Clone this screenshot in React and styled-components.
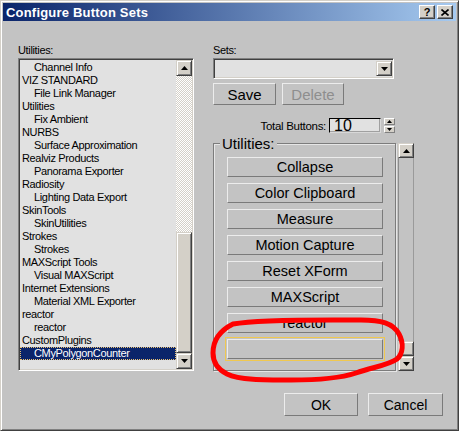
import React from 'react';
import styled, { createGlobalStyle } from 'styled-components';

const GlobalStyle = createGlobalStyle`
	html, body {
		margin: 0;
		padding: 0;
		background: #c3c3c3;
	}
	body {
		font-family: "Liberation Sans", Arial, sans-serif;
	}
`;

const SANS = `"Liberation Sans", Arial, sans-serif`;

const Window = styled.div`
	position: relative;
	width: 459px;
	height: 431px;
	box-sizing: border-box;
	background: #c3c3c3;
	border: 1px solid;
	border-color: #d4d0c8 #404040 #404040 #d4d0c8;
	box-shadow: inset 1px 1px 0 #fff, inset -1px -1px 0 #808080;
	padding: 2px;
	display: flex;
	flex-direction: column;
`;

const TitleBar = styled.div`
	height: 18px;
	display: flex;
	align-items: center;
	justify-content: space-between;
	padding: 0 3px;
	background: linear-gradient(to right, #0a246a, #a6caf0);
`;

const Title = styled.span`
	color: #fff;
	font: bold 13px ${SANS};
	letter-spacing: 0.2px;
`;

const TitleButtons = styled.div`
	display: flex;
	gap: 2px;
`;

const TitleButton = styled.div`
	width: 16px;
	height: 14px;
	box-sizing: border-box;
	background: #d4d0c8;
	border: 1px solid;
	border-color: #fff #404040 #404040 #fff;
	box-shadow: inset -1px -1px 0 #808080;
	display: flex;
	align-items: center;
	justify-content: center;
	font: bold 11px ${SANS};
	color: #000;
	line-height: 1;
`;

const Main = styled.div`
	display: flex;
	gap: 19px;
	padding: 22px 0 0 15px;
`;

const Column = styled.div`
	width: ${(p) => p.$width}px;
	display: flex;
	flex-direction: column;
`;

const Label = styled.div`
	font: 11px ${SANS};
	letter-spacing: -0.35px;
	line-height: 14px;
	height: 14px;
	margin-bottom: 1px;
	color: #000;
`;

const ListBox = styled.div`
	width: 176px;
	height: 313px;
	box-sizing: border-box;
	border: 1px solid;
	border-color: #808080 #fff #fff #808080;
	box-shadow: inset 1px 1px 0 #404040, inset -1px -1px 0 #d4d0c8;
	padding: 1px;
	background: #e1e1e1;
	display: flex;
`;

const Items = styled.div`
	flex: 1;
	overflow: hidden;
	padding-top: 1px;
`;

const Item = styled.div`
	height: 13px;
	line-height: 13px;
	padding-left: ${(p) => (p.$sub ? 14 : 2)}px;
	font: 11px ${SANS};
	letter-spacing: -0.35px;
	white-space: nowrap;
	box-sizing: border-box;
	color: ${(p) => (p.$selected ? '#fff' : '#000')};
	background: ${(p) => (p.$selected ? '#0a246a' : 'transparent')};
	outline: ${(p) => (p.$selected ? '1px dotted #e8c070' : 'none')};
	outline-offset: -1px;
`;

const ScrollBar = styled.div`
	width: 16px;
	display: flex;
	flex-direction: column;
`;

const ScrollButton = styled.div`
	width: 16px;
	height: ${(p) => p.$h || 16}px;
	box-sizing: border-box;
	background: #d4d0c8;
	border: 1px solid;
	border-color: #d4d0c8 #404040 #404040 #d4d0c8;
	box-shadow: inset 1px 1px 0 #fff, inset -1px -1px 0 #808080;
	display: flex;
	align-items: center;
	justify-content: center;
	flex-shrink: 0;
`;

const CheckerTrack = styled.div`
	flex: 1;
	background-color: #fff;
	background-image: repeating-conic-gradient(#d4d0c8 0 25%, #fff 0 50%);
	background-size: 2px 2px;
`;

const PlainTrack = styled.div`
	flex: 1;
	box-sizing: border-box;
	border-left: 1px solid #8c8c8c;
	border-right: 1px solid #9a9a9a;
	background: #c3c3c3;
`;

const Combo = styled.div`
	width: 181px;
	height: 21px;
	box-sizing: border-box;
	border: 1px solid;
	border-color: #808080 #fff #fff #808080;
	box-shadow: inset 1px 1px 0 #404040, inset -1px -1px 0 #d4d0c8;
	background: #e1e1e1;
	padding: 2px 1px 2px 2px;
	display: flex;
	justify-content: flex-end;
`;

const ComboButton = styled.div`
	width: 16px;
	height: 15px;
	box-sizing: border-box;
	background: #d4d0c8;
	border: 1px solid;
	border-color: #d4d0c8 #404040 #404040 #d4d0c8;
	box-shadow: inset 1px 1px 0 #fff, inset -1px -1px 0 #808080;
	display: flex;
	align-items: center;
	justify-content: center;
`;

const Row = styled.div`
	display: flex;
	align-items: center;
	gap: ${(p) => p.$gap || 0}px;
	margin-top: ${(p) => p.$top || 0}px;
	justify-content: ${(p) => p.$justify || 'flex-start'};
	padding-right: ${(p) => p.$right || 0}px;
`;

const Button = styled.div`
	width: ${(p) => p.$w}px;
	height: ${(p) => p.$h || 20}px;
	box-sizing: border-box;
	background: #c3c3c3;
	border: 1px solid;
	border-color: #ececec #7a7a7a #7a7a7a #ececec;
	display: flex;
	align-items: center;
	justify-content: center;
	font: ${(p) => p.$size || 14.5}px ${SANS};
	color: ${(p) => (p.$disabled ? '#8e8e8e' : '#000')};
	white-space: nowrap;
	flex-shrink: 0;
	outline: ${(p) => (p.$focus ? '1px solid #f0c850' : 'none')};
	outline-offset: 1px;
`;

const CountLabel = styled.span`
	font: 11.5px ${SANS};
	letter-spacing: -0.3px;
	color: #000;
`;

const NumberInput = styled.div`
	width: 52px;
	height: 15px;
	box-sizing: border-box;
	background: #e1e1e1;
	border: 1px solid;
	border-color: #000 #d8d8d8 #d8d8d8 #000;
	box-shadow: inset -1px -1px 0 #a0a0a0;
	font: 16px ${SANS};
	line-height: 13px;
	padding-left: 4px;
	color: #000;
	overflow: hidden;
`;

const Spinner = styled.div`
	width: 11px;
	height: 15px;
	display: flex;
	flex-direction: column;
	gap: 1px;
`;

const SpinHalf = styled.div`
	flex: 1;
	box-sizing: border-box;
	background: #d4d0c8;
	border: 1px solid;
	border-color: #fff #808080 #808080 #fff;
	display: flex;
	align-items: center;
	justify-content: center;
`;

const GroupRow = styled.div`
	display: flex;
	gap: 2px;
	margin-top: 10px;
	height: 228px;
`;

const GroupBox = styled.div`
	position: relative;
	width: 183px;
	box-sizing: border-box;
	border: 1px solid #7c7c7c;
	box-shadow: inset 1px 1px 0 #e6e6e6, 1px 1px 0 #e6e6e6;
	padding: 13px 12px 0 13px;
	display: flex;
	flex-direction: column;
	gap: 6px;
`;

const Legend = styled.span`
	position: absolute;
	top: -9px;
	left: 6px;
	padding: 0 2px;
	background: #c3c3c3;
	font: 15px ${SANS};
	line-height: 17px;
	color: #000;
`;

const Footer = styled.div`
	display: flex;
	justify-content: flex-end;
	gap: 10px;
	padding: 22px 13px 0 0;
`;

const Annotation = styled.svg`
	position: absolute;
	left: 0;
	top: 0;
	pointer-events: none;
`;

const Arrow = ({ up, w = 7, h = 4 }) => (
	<svg width={w} height={h} viewBox={`0 0 ${w} ${h}`}>
		<polygon
			points={up ? `${w / 2},0 ${w},${h} 0,${h}` : `0,0 ${w},0 ${w / 2},${h}`}
			fill="#000"
		/>
	</svg>
);

const listItems = [
	['Channel Info', true],
	['VIZ STANDARD', false],
	['File Link Manager', true],
	['Utilities', false],
	['Fix Ambient', true],
	['NURBS', false],
	['Surface Approximation', true],
	['Realviz Products', false],
	['Panorama Exporter', true],
	['Radiosity', false],
	['Lighting Data Export', true],
	['SkinTools', false],
	['SkinUtilities', true],
	['Strokes', false],
	['Strokes', true],
	['MAXScript Tools', false],
	['Visual MAXScript', true],
	['Internet Extensions', false],
	['Material XML Exporter', true],
	['reactor', false],
	['reactor', true],
	['CustomPlugins', false],
	['CMyPolygonCounter', true],
];

const utilityButtons = [
	'Collapse',
	'Color Clipboard',
	'Measure',
	'Motion Capture',
	'Reset XForm',
	'MAXScript',
	'reactor',
	'',
];

export default function App() {
	return (
		<>
			<GlobalStyle />
			<Window>
				<TitleBar>
					<Title>Configure Button Sets</Title>
					<TitleButtons>
						<TitleButton>?</TitleButton>
						<TitleButton>
							<svg width="8" height="7" viewBox="0 0 8 7">
								<path d="M0.5 0.5 L7.5 6.5 M7.5 0.5 L0.5 6.5" stroke="#000" strokeWidth="1.6" />
							</svg>
						</TitleButton>
					</TitleButtons>
				</TitleBar>

				<Main>
					<Column $width={176}>
						<Label>Utilities:</Label>
						<ListBox>
							<Items>
								{listItems.map(([text, sub], i) => (
									<Item key={i} $sub={sub} $selected={i === listItems.length - 1}>
										{text}
									</Item>
								))}
							</Items>
							<ScrollBar>
								<ScrollButton>
									<Arrow up />
								</ScrollButton>
								<CheckerTrack />
								<ScrollButton $h={121} />
								<ScrollButton>
									<Arrow />
								</ScrollButton>
							</ScrollBar>
						</ListBox>
					</Column>

					<Column $width={201}>
						<Label>Sets:</Label>
						<Combo>
							<ComboButton>
								<Arrow />
							</ComboButton>
						</Combo>
						<Row $gap={6} $top={4}>
							<Button $w={63} $h={22} $size={15}>Save</Button>
							<Button $w={62} $h={22} $size={15} $disabled>Delete</Button>
						</Row>
						<Row $gap={3} $top={13} $justify="flex-end" $right={19}>
							<CountLabel>Total Buttons:</CountLabel>
							<NumberInput>10</NumberInput>
							<Spinner>
								<SpinHalf>
									<Arrow up w={5} h={3} />
								</SpinHalf>
								<SpinHalf>
									<Arrow w={5} h={3} />
								</SpinHalf>
							</Spinner>
						</Row>
						<GroupRow>
							<GroupBox>
								<Legend>Utilities:</Legend>
								{utilityButtons.map((label, i) => (
									<Button key={i} $w={156} $focus={label === ''}>
										{label}
									</Button>
								))}
							</GroupBox>
							<ScrollBar>
								<ScrollButton $h={15}>
									<Arrow up />
								</ScrollButton>
								<PlainTrack />
								<ScrollButton $h={15} />
								<ScrollButton $h={15}>
									<Arrow />
								</ScrollButton>
							</ScrollBar>
						</GroupRow>
					</Column>
				</Main>

				<Footer>
					<Button $w={74} $h={23} $size={14}>OK</Button>
					<Button $w={75} $h={23} $size={14}>Cancel</Button>
				</Footer>

				<Annotation width="459" height="431" viewBox="0 0 459 431">
					<defs>
						<filter id="soft" x="-10%" y="-10%" width="120%" height="120%">
							<feGaussianBlur stdDeviation="0.6" />
						</filter>
					</defs>
					<path
						d="M212 352 C212 340 218 330 232 323 C260 318 320 319 360 319 C380 319 392 322 398 333 C403 342 402 353 396 358 C388 364 372 366 355 372 C340 377 320 379 290 379 C262 379 238 379 226 373 C216 368 212 360 212 352 Z"
						fill="none"
						stroke="#ff0000"
						strokeWidth="5"
						strokeLinejoin="round"
						filter="url(#soft)"
					/>
				</Annotation>
			</Window>
		</>
	);
}
